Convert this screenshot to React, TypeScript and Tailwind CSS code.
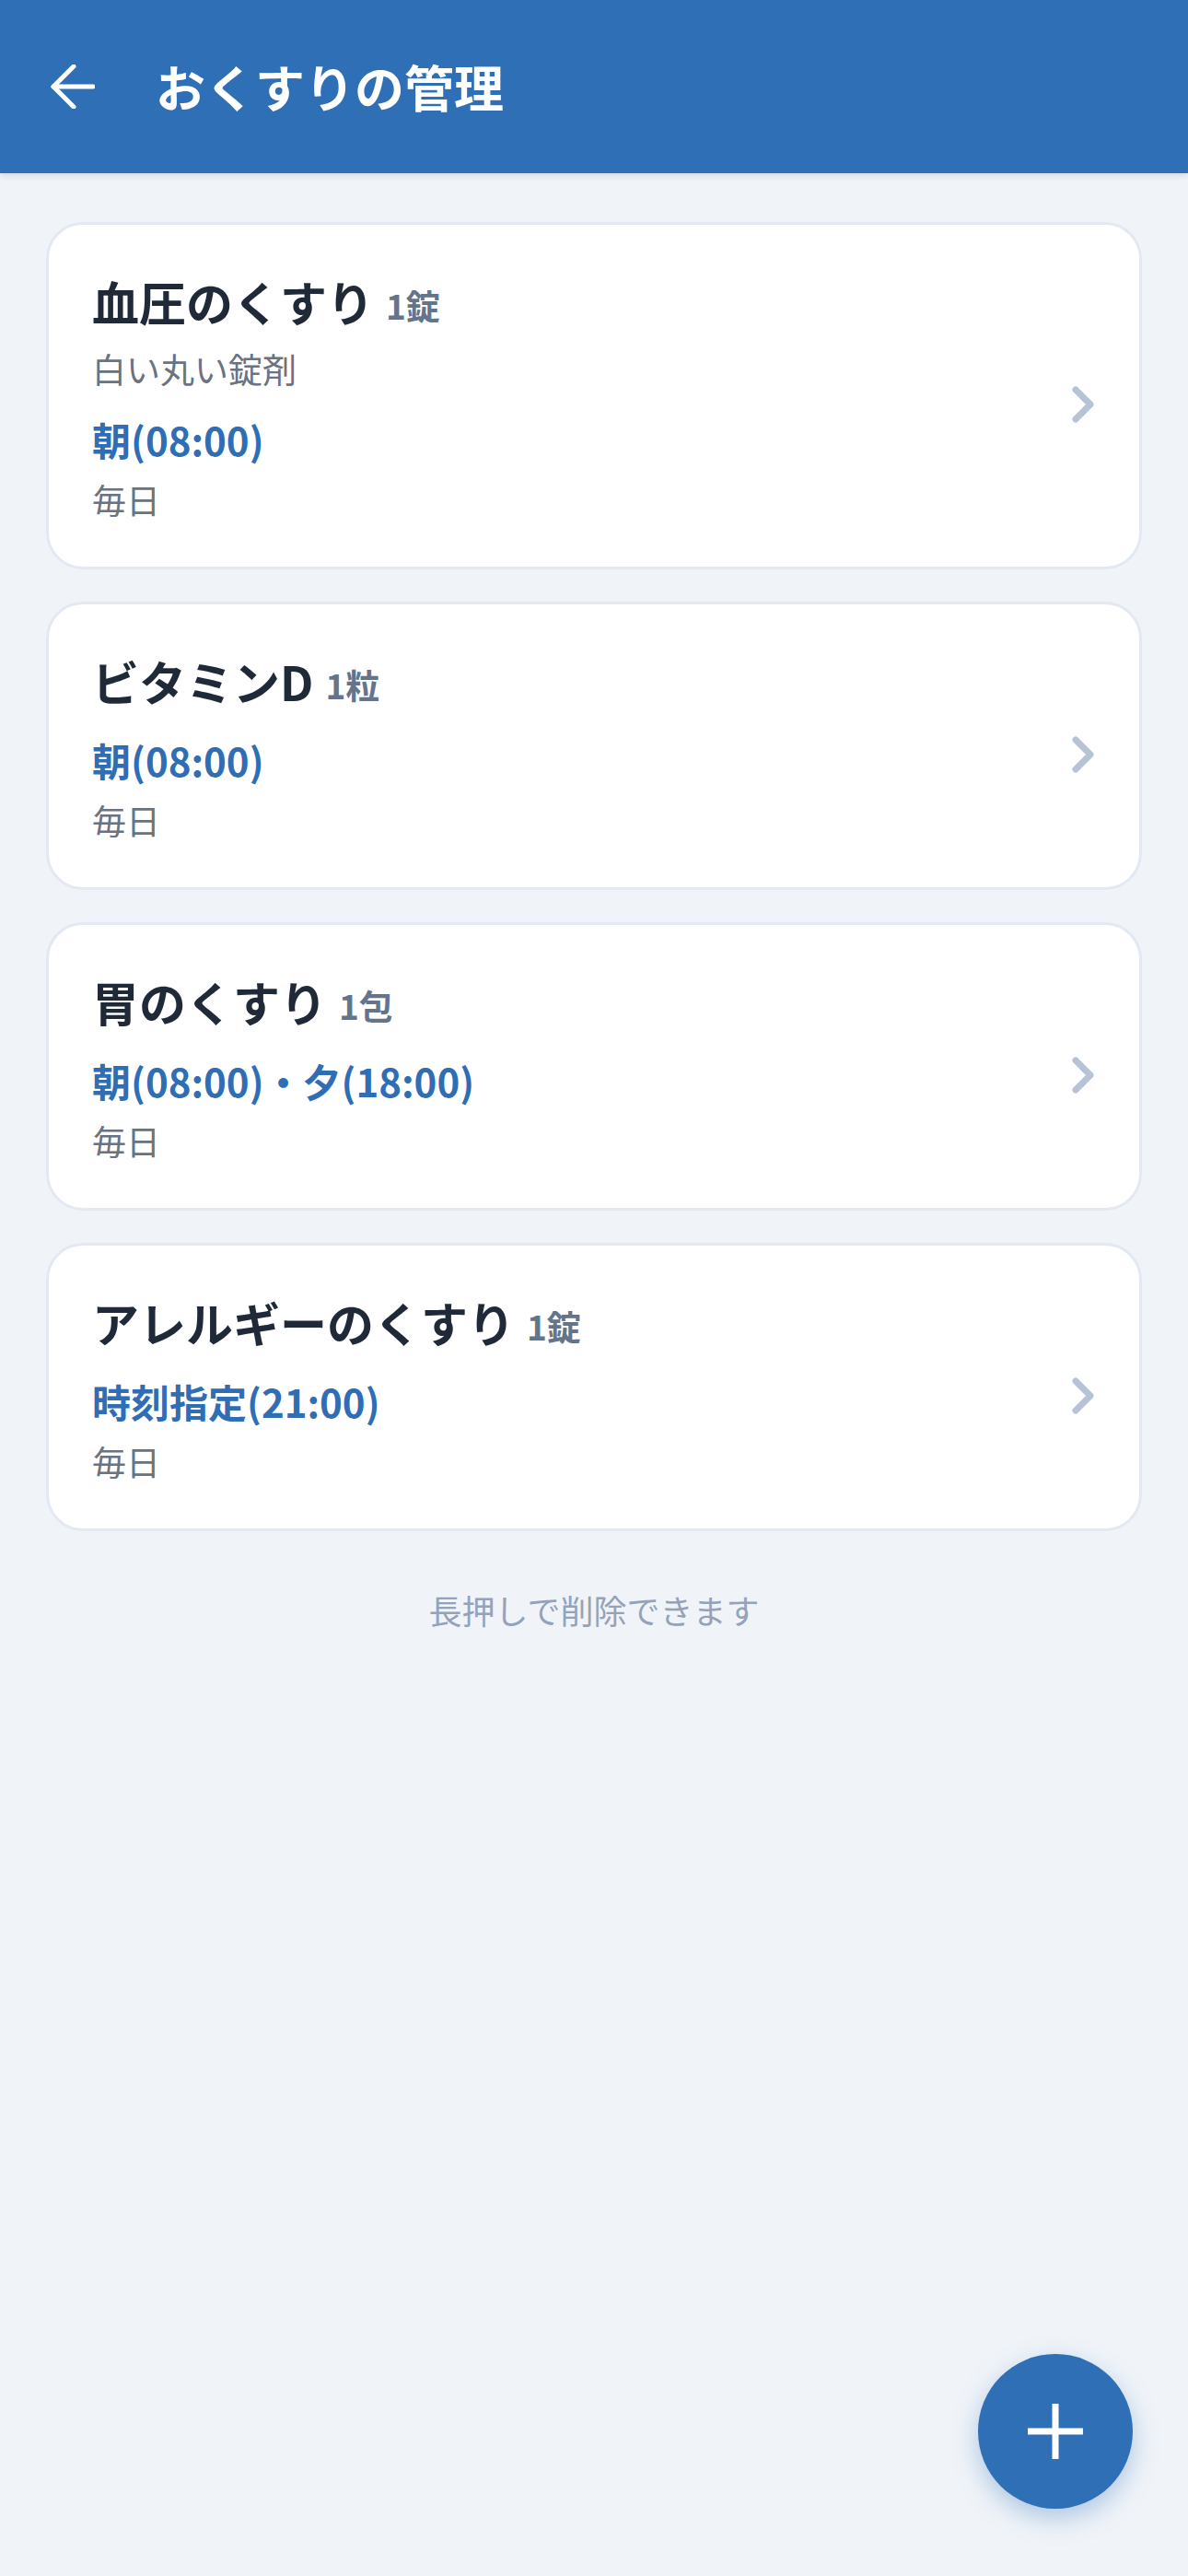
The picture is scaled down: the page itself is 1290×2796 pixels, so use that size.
type Med = {
  name: string;
  dose: string;
  note?: string;
  times: string;
  freq: string;
};

const MEDS: Med[] = [
  { name: '血圧のくすり', dose: '1錠', note: '白い丸い錠剤', times: '朝(08:00)', freq: '毎日' },
  { name: 'ビタミンD', dose: '1粒', times: '朝(08:00)', freq: '毎日' },
  { name: '胃のくすり', dose: '1包', times: '朝(08:00)・夕(18:00)', freq: '毎日' },
  { name: 'アレルギーのくすり', dose: '1錠', times: '時刻指定(21:00)', freq: '毎日' },
];

const FONT = "font-['Noto_Sans_CJK_JP','Noto_Sans',sans-serif]";

function MedCard({ med }: { med: Med }) {
  return (
    <div className="flex items-center rounded-[40px] border-[3px] border-[#e3e9f2] bg-white pl-[47px] pr-[47px] pt-[48px] pb-[46px]">
      <div className="flex flex-1 flex-col">
        <div className="flex h-[71px] items-center whitespace-nowrap">
          <span className="text-[51px] font-bold leading-[71px] text-[#1f2937]">{med.name}</span>
          <span className="ml-[13px] mt-[6px] text-[37px] font-bold leading-[60px] text-[#64748b]">{med.dose}</span>
        </div>
        {med.note && (
          <div className="mt-[10px] h-[54px] text-[37px] leading-[54px] text-[#6b7280]">{med.note}</div>
        )}
        <div className="mt-[18px] h-[63px] text-[42px] font-bold leading-[63px] text-[#2f6db5]">{med.times}</div>
        <div className="mt-[7px] h-[54px] text-[37px] leading-[54px] text-[#6b7280]">{med.freq}</div>
      </div>
      <svg className="mt-[16px]" width="28" height="40" viewBox="0 0 28 40" fill="none" stroke="#b5c3d5" strokeWidth="7" strokeLinecap="round" strokeLinejoin="round">
        <path d="M6 4l16 16L6 36" />
      </svg>
    </div>
  );
}

export default function App() {
  return (
    <div className={`relative min-h-[2796px] w-full bg-[#f0f4f9] ${FONT}`}>
      {/* Header */}
      <header className="flex h-[188px] items-center bg-[#2f6fb5] pl-[55px] shadow-[0_3px_6px_rgba(15,40,80,0.12)]">
        <svg width="48" height="48" viewBox="0 0 48 48" fill="none" stroke="white" strokeWidth="5" strokeLinecap="round" strokeLinejoin="round">
          <path d="M46 24H3" />
          <path d="M25 2 3 24l22 22" />
        </svg>
        <h1 className="ml-[66px] text-[54px] font-bold leading-none text-white">おくすりの管理</h1>
      </header>

      {/* List */}
      <main className="flex flex-col gap-[35px] px-[50px] pt-[53px]">
        {MEDS.map(m => (
          <MedCard key={m.name} med={m} />
        ))}
        <p className="mt-[23px] text-center text-[36px] leading-[54px] text-[#94a3b8]">長押しで削除できます</p>
      </main>

      {/* FAB */}
      <button className="absolute bottom-[73px] right-[60px] flex h-[168px] w-[168px] items-center justify-center rounded-full bg-[#2f6fb5] shadow-[0_10px_28px_rgba(47,111,181,0.35)]">
        <svg width="62" height="62" viewBox="0 0 62 62" stroke="white" strokeWidth="7">
          <path d="M31 1v60M1 31h60" />
        </svg>
      </button>
    </div>
  );
}
